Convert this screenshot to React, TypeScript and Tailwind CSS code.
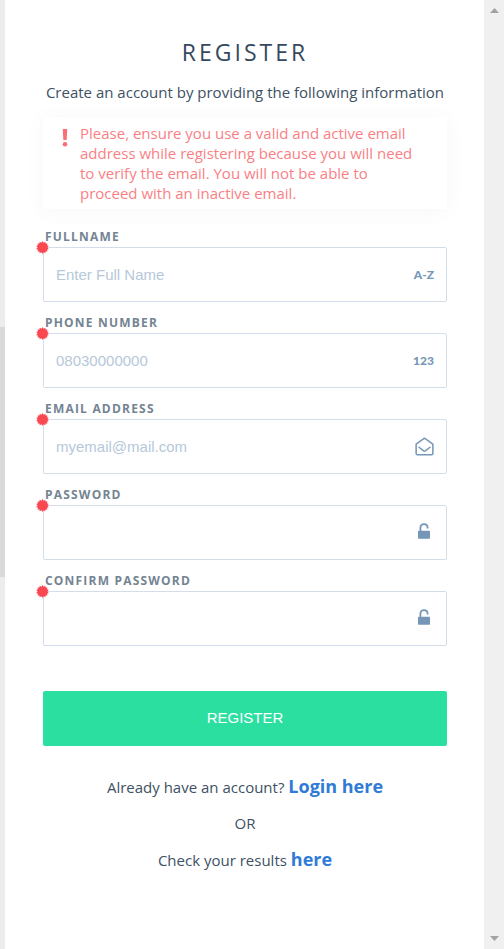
import type { ReactNode } from 'react';

const TextGlyph = ({ children }: { children: string }) => (
  <span className="font-[Lato,sans-serif] text-[12px] font-black leading-none">{children}</span>
);

const MailOpenIcon = () => (
  <svg viewBox="0 0 20 20" className="h-[19px] w-[19px]" fill="none" stroke="currentColor" strokeWidth="1.6" strokeLinejoin="round" strokeLinecap="round" aria-hidden="true">
    <path d="M1.2 7.4 10 1.3l8.8 6.1v10a1.2 1.2 0 0 1-1.2 1.2H2.4a1.2 1.2 0 0 1-1.2-1.2Z" />
    <path d="m4.2 10.8 4.9 3.8q.9.6 1.8 0l4.9-3.8" />
  </svg>
);

const UnlockIcon = () => (
  <svg viewBox="0 0 12 16" className="mb-1 mr-1 h-4 w-3" aria-hidden="true">
    <path d="M2.4 8.5V4.8a3.6 3.6 0 0 1 3.6-3.7 3.6 3.6 0 0 1 3.6 3.4v1.1" fill="none" stroke="currentColor" strokeWidth="1.8" />
    <rect y="7.7" width="12" height="8.1" rx="0.8" fill="currentColor" />
  </svg>
);

const TEETH = 14;
const starPoints = Array.from({ length: TEETH * 2 }, (_, i) => {
  const radius = i % 2 === 0 ? 6.4 : 5;
  const angle = (i * Math.PI) / TEETH;
  return `${(radius * Math.sin(angle)).toFixed(2)},${(-radius * Math.cos(angle)).toFixed(2)}`;
}).join(' ');

const RequiredMark = () => (
  <svg viewBox="-6.5 -6.5 13 13" className="absolute -left-2 -top-[7px] h-[13px] w-[13px] fill-[#fa4850]" aria-hidden="true">
    <polygon points={starPoints} />
  </svg>
);

type Field = { id: string; label: string; type: string; placeholder?: string; icon: ReactNode };

const fields: Field[] = [
  { id: 'fullname', label: 'FULLNAME', type: 'text', placeholder: 'Enter Full Name', icon: <TextGlyph>A-Z</TextGlyph> },
  { id: 'phone', label: 'PHONE NUMBER', type: 'tel', placeholder: '08030000000', icon: <TextGlyph>123</TextGlyph> },
  { id: 'email', label: 'EMAIL ADDRESS', type: 'email', placeholder: 'myemail@mail.com', icon: <MailOpenIcon /> },
  { id: 'password', label: 'PASSWORD', type: 'password', icon: <UnlockIcon /> },
  { id: 'confirm', label: 'CONFIRM PASSWORD', type: 'password', icon: <UnlockIcon /> },
];

function FormField({ id, label, type, placeholder, icon }: Field) {
  return (
    <div>
      <label htmlFor={id} className="block pl-0.5 text-[12px] font-bold leading-5 tracking-widest text-[#748492]">
        {label}
      </label>
      <div className="relative flex h-[55px] items-center rounded-xs border border-[#d3deea] pr-3 text-[#7596b6]">
        <input
          id={id}
          type={type}
          placeholder={placeholder}
          className="h-full min-w-0 flex-1 bg-transparent pl-3 font-[Liberation_Sans,Arial,sans-serif] text-[15px] text-[#3b4f63] outline-none placeholder:text-[#b6c8da]"
        />
        {icon}
        <RequiredMark />
      </div>
    </div>
  );
}

export default function App() {
  return (
    <div className="flex min-h-screen bg-white font-['Open_Sans',sans-serif] text-[15px] text-[#3d5163]">
      <div className="w-[5px] shrink-0 bg-[#ebecee] pt-[327px]">
        <div className="h-[250px] bg-[#d8d9db]" />
      </div>

      <main className="min-w-0 flex-1 pl-[38px] pr-[37px] pt-9">
        <h1 className="text-center text-[23px] leading-8 tracking-[3px] text-[#34495e]">REGISTER</h1>
        <p className="mt-3.5 text-center leading-5">Create an account by providing the following information</p>

        <div className="mt-[15px] flex gap-3 bg-white py-1.5 pl-[19px] pr-7 leading-5 text-[#fa7f85] shadow-[0_2px_18px_rgba(60,100,80,0.05)]">
          <svg viewBox="0 0 6 18" className="mt-1.5 h-[18px] w-1.5 shrink-0 fill-[#fa6f76]" aria-hidden="true">
            <path d="M.8 0h4.4l-.5 11H1.3Z" />
            <circle cx="3" cy="15.2" r="2.3" />
          </svg>
          <p>
            Please, ensure you use a valid and active email address while registering because you will need to verify the
            email. You will not be able to proceed with an inactive email.
          </p>
        </div>

        <form onSubmit={(e) => e.preventDefault()}>
          <div className="mt-[18px] flex flex-col gap-[11px]">
            {fields.map((field) => (
              <FormField key={field.id} {...field} />
            ))}
          </div>
          <button
            type="submit"
            className="mt-[45px] h-[55px] w-full rounded-xs bg-[#2bdfa1] font-[Liberation_Sans,Arial,sans-serif] text-[15px] text-white"
          >
            REGISTER
          </button>
        </form>

        <div className="mt-7 flex flex-col gap-3 pb-12 text-center leading-6">
          <p>
            Already have an account?{' '}
            <a href="#login" className="text-[18px] font-bold text-[#2f7bd6]">Login here</a>
          </p>
          <p>OR</p>
          <p>
            Check your results <a href="#results" className="text-[18px] font-bold text-[#2f7bd6]">here</a>
          </p>
        </div>
      </main>

      <div className="flex w-5 shrink-0 flex-col items-center justify-between bg-[#f0f0f0] py-2">
        <svg viewBox="0 0 9 5" className="h-[5px] w-[9px] fill-[#a3a3a3]" aria-hidden="true">
          <path d="M4.5 0 9 5H0Z" />
        </svg>
        <svg viewBox="0 0 9 5" className="h-[5px] w-[9px] fill-[#a3a3a3]" aria-hidden="true">
          <path d="M4.5 5 9 0H0Z" />
        </svg>
      </div>
    </div>
  );
}
